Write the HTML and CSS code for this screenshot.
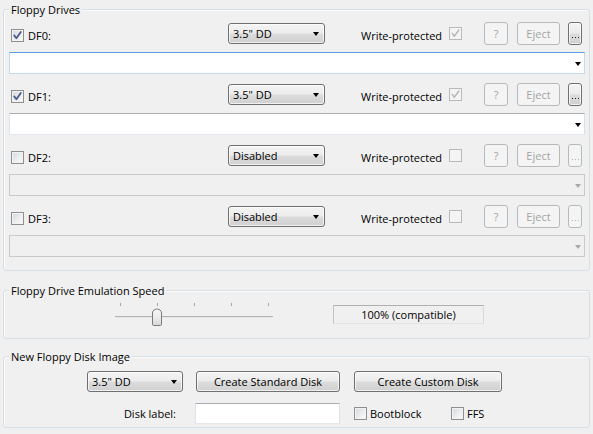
FILE: index.html
```html
<!DOCTYPE html>
<html>
<head>
<meta charset="utf-8">
<link rel="stylesheet" href="styles.css">
</head>
<body>
<div class="dialog">
  <section class="group drives">
    <div class="group-title">Floppy Drives</div>
    <div class="drive-list">
      <div class="drive">
        <div class="drive-row">
          <label class="drive-name"><span class="cb"><svg viewBox="0 0 13 13"><path class="tick" d="M3.2 6.4 L5.4 9.2 L9.8 3"/></svg></span>DF0:</label>
          <div class="combo"><span class="combo-text">3.5" DD</span><span class="arrow"></span></div>
          <span class="wp-label">Write-protected</span>
          <span class="cb disabled"><svg viewBox="0 0 13 13"><path class="tick" d="M3.2 6.4 L5.4 9.2 L9.8 3"/></svg></span>
          <button class="btn q" disabled>?</button>
          <button class="btn eject" disabled>Eject</button>
          <button class="btn more"><span class="dots"></span></button>
        </div>
        <div class="path focus"><span class="arrow"></span></div>
      </div>
      <div class="drive">
        <div class="drive-row">
          <label class="drive-name"><span class="cb"><svg viewBox="0 0 13 13"><path class="tick" d="M3.2 6.4 L5.4 9.2 L9.8 3"/></svg></span>DF1:</label>
          <div class="combo"><span class="combo-text">3.5" DD</span><span class="arrow"></span></div>
          <span class="wp-label">Write-protected</span>
          <span class="cb disabled"><svg viewBox="0 0 13 13"><path class="tick" d="M3.2 6.4 L5.4 9.2 L9.8 3"/></svg></span>
          <button class="btn q" disabled>?</button>
          <button class="btn eject" disabled>Eject</button>
          <button class="btn more"><span class="dots"></span></button>
        </div>
        <div class="path"><span class="arrow"></span></div>
      </div>
      <div class="drive">
        <div class="drive-row">
          <label class="drive-name"><span class="cb"></span>DF2:</label>
          <div class="combo"><span class="combo-text">Disabled</span><span class="arrow"></span></div>
          <span class="wp-label">Write-protected</span>
          <span class="cb disabled"></span>
          <button class="btn q" disabled>?</button>
          <button class="btn eject" disabled>Eject</button>
          <button class="btn more" disabled><span class="dots"></span></button>
        </div>
        <div class="path disabled"><span class="arrow"></span></div>
      </div>
      <div class="drive">
        <div class="drive-row">
          <label class="drive-name"><span class="cb"></span>DF3:</label>
          <div class="combo"><span class="combo-text">Disabled</span><span class="arrow"></span></div>
          <span class="wp-label">Write-protected</span>
          <span class="cb disabled"></span>
          <button class="btn q" disabled>?</button>
          <button class="btn eject" disabled>Eject</button>
          <button class="btn more" disabled><span class="dots"></span></button>
        </div>
        <div class="path disabled"><span class="arrow"></span></div>
      </div>
    </div>
  </section>

  <section class="group speed-group">
    <div class="group-title">Floppy Drive Emulation Speed</div>
    <div class="speed-row">
      <svg class="slider" width="160" height="25" viewBox="0 0 160 25">
        <defs>
          <linearGradient id="thumbg" x1="0" y1="0" x2="0" y2="1">
            <stop offset="0" stop-color="#f7f7f7"/>
            <stop offset="0.5" stop-color="#ececec"/>
            <stop offset="1" stop-color="#d6d6d6"/>
          </linearGradient>
        </defs>
        <g stroke="#a7a7a7" stroke-width="1">
          <line x1="5.5" y1="1" x2="5.5" y2="4"/>
          <line x1="42.5" y1="1" x2="42.5" y2="4"/>
          <line x1="79.5" y1="1" x2="79.5" y2="4"/>
          <line x1="116.5" y1="1" x2="116.5" y2="4"/>
          <line x1="153.5" y1="1" x2="153.5" y2="4"/>
        </g>
        <rect x="0" y="14" width="158" height="1" fill="#b3b3b3"/>
        <rect x="0" y="15" width="158" height="1" fill="#e6e6e6"/>
        <path d="M37.5 11 Q37.5 9 39 8 L41.5 7 Q42 6.8 42.5 7 L45 8 Q46.5 9 46.5 11 L46.5 22.5 Q46.5 23.5 45.5 23.5 L38.5 23.5 Q37.5 23.5 37.5 22.5 Z" fill="url(#thumbg)" stroke="#7a7a7a"/>
      </svg>
      <div class="speed-label">100% (compatible)</div>
    </div>
  </section>

  <section class="group new-disk">
    <div class="group-title">New Floppy Disk Image</div>
    <div class="new-grid">
      <div class="combo wide"><span class="combo-text">3.5" DD</span><span class="arrow"></span></div>
      <button class="btn std">Create Standard Disk</button>
      <button class="btn std">Create Custom Disk</button>
      <span class="disk-label">Disk label:</span>
      <div class="textbox"></div>
      <div class="opts">
        <label class="opt boot"><span class="cb"></span>Bootblock</label>
        <label class="opt"><span class="cb"></span>FFS</label>
      </div>
    </div>
  </section>
</div>
</body>
</html>
```
FILE: styles.css
```css
html, body {
  margin: 0;
  padding: 0;
  background: #f0f0f0;
}
body {
  font-family: "Open Sans", "Noto Sans", sans-serif;
  font-size: 11px;
  color: #000;
  width: 593px;
  height: 434px;
  overflow: hidden;
}
.dialog {
  padding: 9px 3px 0 3px;
}
.group {
  border: 1px solid #d5dfe5;
  border-radius: 3px;
  box-shadow: inset 1px 1px 0 #fbfbfb;
}
.group-title {
  margin: -8px 0 0 5px;
  padding: 0 2px;
  width: fit-content;
  background: #f0f0f0;
  line-height: 15px;
  height: 15px;
}

/* Floppy drives */
.drives {
  padding: 0 4px 13px 0;
}
.drive-list {
  margin-top: 5px;
  padding-left: 5px;
  display: flex;
  flex-direction: column;
  gap: 9px;
}
.drive {
  display: flex;
  flex-direction: column;
  gap: 7px;
}
.drive-row {
  height: 23px;
  display: flex;
  align-items: center;
  padding-left: 2px;
}
.drive-name {
  width: 217px;
  display: flex;
  align-items: center;
  padding-top: 3px;
}
.drive-name .cb {
  margin-right: 4px;
}
.cb {
  width: 13px;
  height: 13px;
  box-sizing: border-box;
  border: 1px solid #8e8f8f;
  background: linear-gradient(135deg, #d3d6db 0%, #eeeff1 60%, #fafafa 100%);
  box-shadow: inset 0 0 0 1px #f3f3f3;
  display: inline-block;
  flex: none;
  position: relative;
}
.cb svg {
  position: absolute;
  left: -1px;
  top: -1px;
  width: 13px;
  height: 13px;
}
.tick {
  fill: none;
  stroke: #4a5c8c;
  stroke-width: 1.8;
  stroke-linecap: round;
  stroke-linejoin: round;
}
.cb.disabled {
  border-color: #b9b9b9;
  background: #f4f4f4;
  box-shadow: none;
}
.cb.disabled .tick {
  stroke: #b5b5b5;
  stroke-width: 1.4;
}

.combo {
  width: 97px;
  height: 21px;
  box-sizing: border-box;
  border: 1px solid #707070;
  border-radius: 3px;
  background: linear-gradient(#f4f4f4 0%, #ececec 48%, #dcdcdc 52%, #d0d0d0 100%);
  box-shadow: inset 0 0 0 1px rgba(255,255,255,0.7);
  display: flex;
  align-items: center;
  justify-content: space-between;
  padding: 0 5px 0 4px;
  flex: none;
}
.combo .arrow {
  border-top: 4px solid #000;
  border-left: 3.5px solid transparent;
  border-right: 3.5px solid transparent;
  margin-top: 1px;
}
.wp-label {
  margin-left: 36px;
  width: 88px;
  padding-top: 3px;
}
.btn {
  box-sizing: border-box;
  height: 23px;
  padding: 0;
  border: 1px solid #707070;
  border-radius: 3px;
  background: linear-gradient(#f4f4f4 0%, #ececec 48%, #dcdcdc 52%, #d0d0d0 100%);
  box-shadow: inset 0 0 0 1px rgba(255,255,255,0.7);
  font: inherit;
  color: #000;
  flex: none;
}
.btn:disabled {
  border-color: #b7babc;
  background: #f4f4f4;
  box-shadow: none;
  color: #a3a3a3;
}
.btn.q {
  margin-left: 22px;
  width: 24px;
}
.btn.eject {
  margin-left: 9px;
  width: 43px;
}
.btn.more {
  margin-left: 8px;
  width: 14px;
  display: flex;
  justify-content: center;
  align-items: flex-end;
  padding-bottom: 6px;
}
.dots {
  width: 9px;
  height: 1px;
  flex: none;
  background: radial-gradient(circle, currentColor 0.6px, transparent 0.7px) 0 0 / 3px 1px repeat-x;
  color: #222;
}
.btn.more:disabled .dots {
  color: #b0b0b0;
}

.path {
  height: 22px;
  box-sizing: border-box;
  border: 1px solid;
  border-color: #abadb3 #dbdfe6 #e3e9ef #e2e3ea;
  background: #fff;
  display: flex;
  align-items: center;
  justify-content: flex-end;
  padding-right: 3px;
}
.path.focus {
  border-color: #569de5 #c5daed #c5daed #c5daed;
}
.path .arrow {
  border-top: 4px solid #000;
  border-left: 3.5px solid transparent;
  border-right: 3.5px solid transparent;
  margin-top: 1px;
}
.path.disabled {
  border-color: #c9c9c9;
  background: #f0f0f0;
}
.path.disabled .arrow {
  border-top-color: #a8a8a8;
}

/* Speed */
.speed-group {
  margin-top: 19px;
  padding: 0 0 11px 0;
}
.speed-row {
  margin-top: 4px;
  display: flex;
  align-items: flex-start;
  padding-left: 111px;
  height: 25px;
}
.slider {
  display: block;
  flex: none;
}
.speed-label {
  margin-left: 58px;
  margin-top: 3px;
  width: 151px;
  height: 19px;
  box-sizing: border-box;
  border: 1px solid;
  border-color: #b0b0b0 #d9d9d9 #e3e3e3 #c3c3c3;
  display: flex;
  align-items: center;
  justify-content: center;
}

/* New disk */
.new-disk {
  margin-top: 17px;
  padding: 0 0 3px 0;
}
.new-grid {
  margin-top: 7px;
  padding-left: 83px;
  display: grid;
  grid-template-columns: 96px 144px 149px;
  grid-template-rows: 21px 21px;
  column-gap: 13px;
  row-gap: 11px;
  align-items: center;
}
.combo.wide {
  width: 96px;
}
.btn.std {
  height: 21px;
}
.new-grid .btn.std:last-of-type {
  margin-left: 1px;
}
.disk-label {
  text-align: right;
  padding-right: 7px;
}
.textbox {
  height: 21px;
  width: 145px;
  margin-left: -1px;
  box-sizing: border-box;
  border: 1px solid;
  border-color: #abadb3 #dbdfe6 #e3e9ef #e2e3ea;
  background: #fff;
}
.opts {
  display: flex;
  align-items: center;
  margin-left: 1px;
}
.opt {
  display: flex;
  align-items: center;
}
.opt .cb {
  margin-right: 3px;
}
.opt.boot {
  width: 97px;
}
```
